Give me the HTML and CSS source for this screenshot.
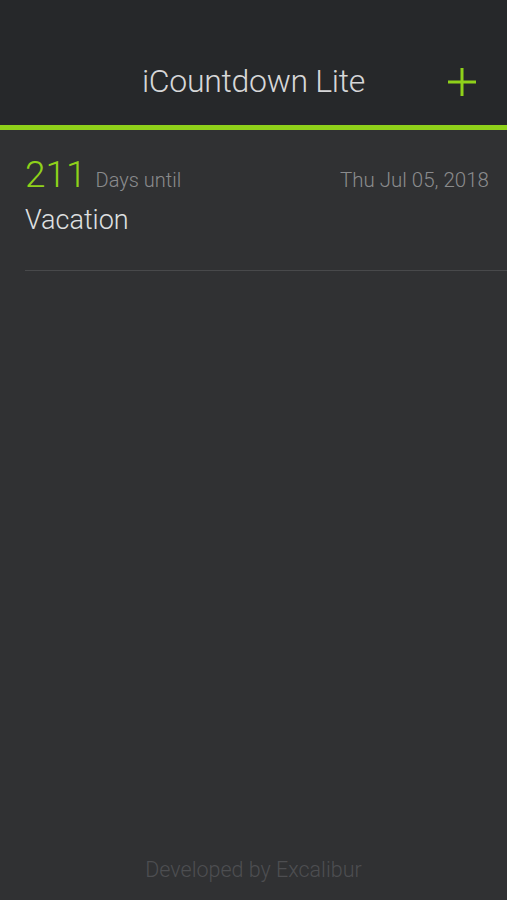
FILE: index.html
```html
<!DOCTYPE html>
<html>
<head>
<meta charset="utf-8">
<link rel="stylesheet" href="styles.css">
</head>
<body>
<div class="app">
  <header class="header">
    <div class="title">iCountdown Lite</div>
    <button class="add" aria-label="Add">
      <svg width="30" height="30" viewBox="0 0 30 30"><path d="M15 1V29M1 15H29" stroke="#8fd11a" stroke-width="3" fill="none"/></svg>
    </button>
  </header>
  <main class="list">
    <div class="item">
      <div class="row1">
        <span class="count">211</span>
        <span class="label">Days until</span>
        <span class="date">Thu Jul 05, 2018</span>
      </div>
      <div class="name">Vacation</div>
    </div>
  </main>
  <footer class="footer">Developed by Excalibur</footer>
</div>
</body>
</html>
```
FILE: styles.css
```css
* { box-sizing: border-box; }
html, body { margin: 0; padding: 0; }
body {
  background: #303133;
  font-family: Roboto, "Liberation Sans", sans-serif;
  font-weight: 300;
}
.app {
  height: 900px;
  display: flex;
  flex-direction: column;
}
.header {
  height: 130px;
  background: #26282a;
  border-bottom: 5px solid #8fd11a;
  position: relative;
  display: flex;
  align-items: flex-start;
  justify-content: center;
  padding-top: 62px;
}
.title {
  color: #d6d7d8;
  font-size: 32px;
  line-height: 38px;
  letter-spacing: -0.3px;
}
.add {
  position: absolute;
  right: 30px;
  top: 67px;
  padding: 0;
  border: 0;
  background: none;
  width: 30px;
  height: 30px;
}
.add svg { display: block; }
.list { flex: 1; padding-left: 25px; }
.item {
  padding-top: 25px;
  height: 141px;
  border-bottom: 1px solid #48494b;
}
.row1 {
  display: flex;
  align-items: baseline;
  height: 40px;
}
.count {
  color: #8fd11a;
  font-size: 37px;
  line-height: 40px;
}
.label {
  color: #8a8b8d;
  font-size: 20px;
  margin-left: 9px;
}
.date {
  color: #8a8b8d;
  font-size: 20.5px;
  margin-left: auto;
  margin-right: 18px;
}
.name {
  color: #dfe0e1;
  font-size: 27px;
  line-height: 36px;
  margin-top: 7px;
}
.footer {
  text-align: center;
  color: #4d4e51;
  font-size: 21.5px;
  padding-bottom: 18px;
}
```
